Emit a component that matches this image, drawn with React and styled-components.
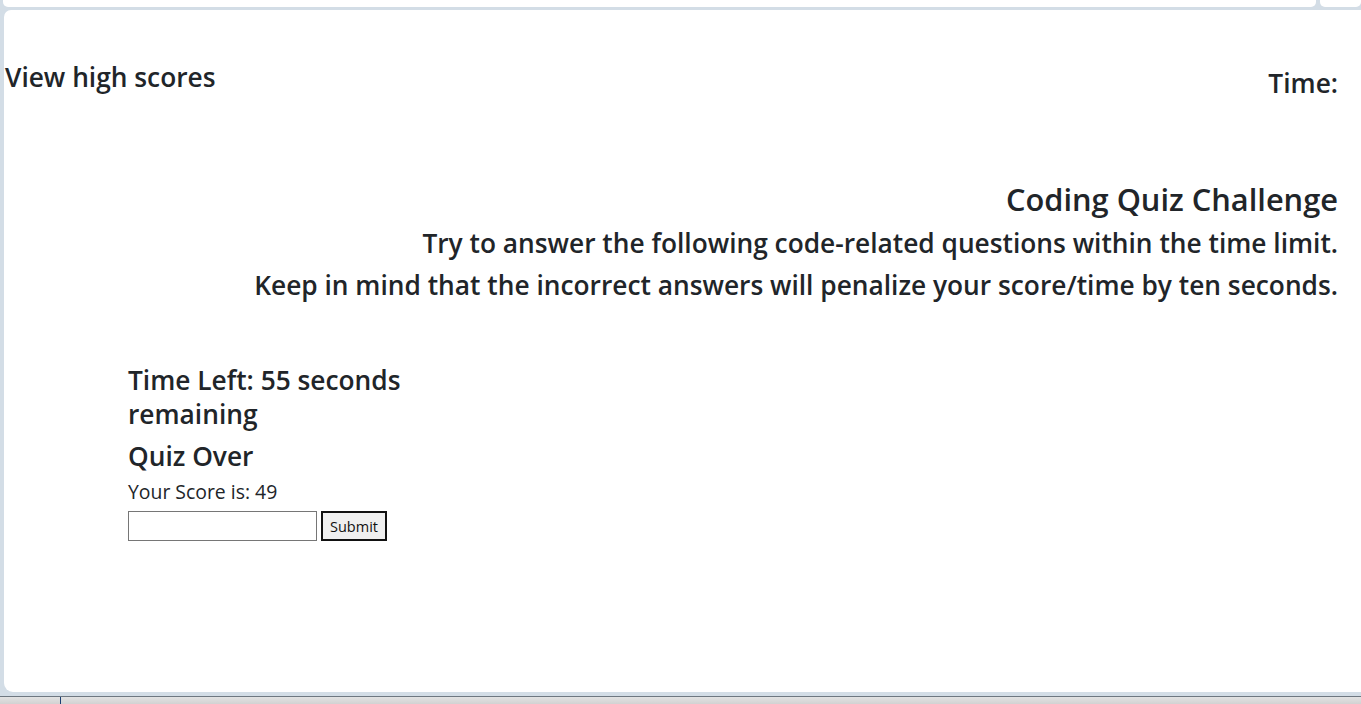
import React from 'react';
import styled, { createGlobalStyle } from 'styled-components';

const GlobalStyle = createGlobalStyle`
  html, body {
    margin: 0;
    padding: 0;
    height: 100%;
    overflow: hidden;
  }
  body {
    font-family: "Open Sans", "Noto Sans", sans-serif;
    color: #212529;
  }
`;

const Window = styled.div`
  display: flex;
  flex-direction: column;
  height: 100vh;
  background: #d3dde6;
`;

const TabStrip = styled.div`
  display: flex;
  gap: 4px;
  height: 7px;
  padding-left: 3px;
`;

const Tab = styled.div`
  flex: ${p => (p.grow ? 1 : 'none')};
  width: ${p => p.width || 'auto'};
  background: #fff;
  border-radius: 0 0 5px 5px;
`;

const Panel = styled.main`
  margin: 3px 0 0 4px;
  height: 682px;
  background: #fff;
  border-radius: 7px 0 0 9px;
  padding-right: 23px;
  box-sizing: border-box;
`;

const Header = styled.header`
  display: flex;
  justify-content: space-between;
  align-items: flex-start;
  padding: 50px 0 0 1px;
`;

const H3 = styled.h3`
  margin: ${p => p.offset || 0}px 0 8px;
  font-size: 26.3px;
  font-weight: 600;
  line-height: 34px;
`;

const Intro = styled.section`
  margin-top: 72px;
  text-align: right;
`;

const Title = styled.h2`
  margin: 0 0 8px;
  font-size: 30.8px;
  font-weight: 600;
  line-height: 38px;
`;

const Quiz = styled.section`
  margin: 61px 0 0 124px;
  width: 284px;
`;

const Score = styled.p`
  margin: -1px 0 7px;
  font-size: 19.4px;
  line-height: 24px;
`;

const Form = styled.form`
  display: flex;
  gap: 4px;
`;

const Input = styled.input`
  width: 189px;
  height: 30px;
  box-sizing: border-box;
  border: 1px solid #767676;
  padding: 1px 2px;
  font-size: 14px;
`;

const Button = styled.button`
  width: 66px;
  height: 30px;
  box-sizing: border-box;
  border: 2px solid #111;
  background: #efefef;
  font-family: "Open Sans", sans-serif;
  font-size: 14.5px;
  color: #111;
  padding: 0;
`;

const StatusBar = styled.div`
  margin-top: 4px;
  flex: 1;
  border-top: 1px solid #6e7780;
  background: linear-gradient(#e2e2e2, #d2d2d2);
  padding-left: 60px;
`;

const Marker = styled.div`
  width: 1px;
  height: 100%;
  background: #1b3f73;
`;

export default function App() {
  return (
    <Window>
      <GlobalStyle />
      <TabStrip>
        <Tab width="1313px" />
        <Tab grow />
      </TabStrip>
      <Panel>
        <Header>
          <H3>View high scores</H3>
          <H3 offset={6}>Time:</H3>
        </Header>
        <Intro>
          <Title>Coding Quiz Challenge</Title>
          <H3>Try to answer the following code-related questions within the time limit.</H3>
          <H3>Keep in mind that the incorrect answers will penalize your score/time by ten seconds.</H3>
        </Intro>
        <Quiz>
          <H3>Time Left: 55 seconds remaining</H3>
          <H3>Quiz Over</H3>
          <Score>Your Score is: 49</Score>
          <Form onSubmit={e => e.preventDefault()}>
            <Input type="text" />
            <Button type="submit">Submit</Button>
          </Form>
        </Quiz>
      </Panel>
      <StatusBar>
        <Marker />
      </StatusBar>
    </Window>
  );
}
